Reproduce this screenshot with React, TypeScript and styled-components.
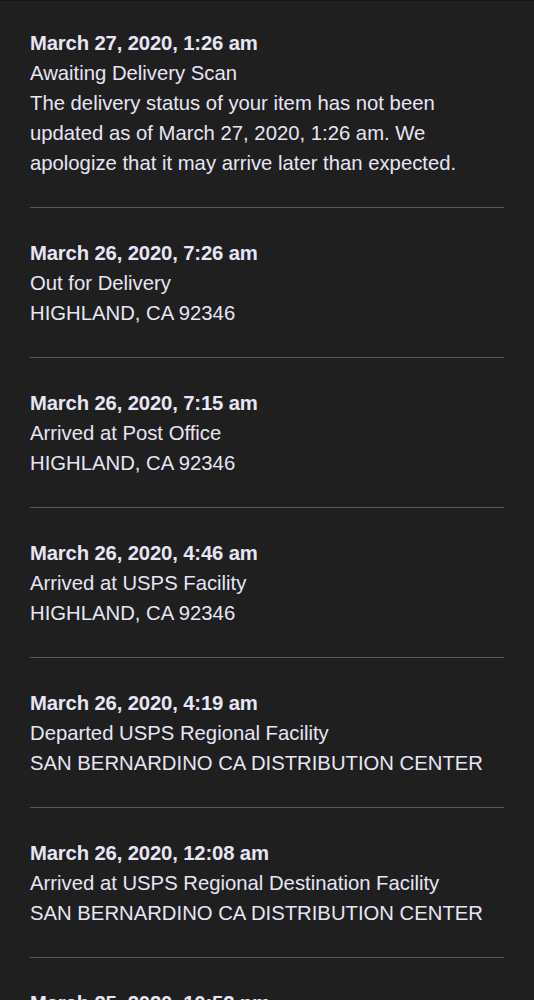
import React from 'react';
import styled, { createGlobalStyle } from 'styled-components';

const GlobalStyle = createGlobalStyle`
	html, body {
		margin: 0;
		padding: 0;
		background-color: #1f1f1f;
	}
`;

const Page = styled.div`
	background-color: #1f1f1f;
	border-top: 1px solid #151515;
	min-height: 1000px;
	padding: 0 30px;
	font-family: 'Liberation Sans', Arial, Helvetica, sans-serif;
	color: #e7e5f6;
	box-sizing: border-box;
`;

const EventList = styled.ul`
	list-style: none;
	margin: 0;
	padding: 0;
`;

const EventItem = styled.li`
	padding: 30px 0 29px;
	border-bottom: 1px solid #5a5a5c;

	&:first-child {
		padding-top: 27px;
	}
`;

const EventDate = styled.div`
	font-size: 20.3px;
	line-height: 30px;
	font-weight: 700;
	letter-spacing: -0.15px;
`;

const EventLine = styled.div`
	font-size: 20.3px;
	line-height: 30px;
	font-weight: 400;
`;

type TrackingEvent = {
	date: string;
	status: string;
	detail: string[];
};

const events: TrackingEvent[] = [
	{
		date: 'March 27, 2020, 1:26 am',
		status: 'Awaiting Delivery Scan',
		detail: [
			'The delivery status of your item has not been',
			'updated as of March 27, 2020, 1:26 am. We',
			'apologize that it may arrive later than expected.',
		],
	},
	{ date: 'March 26, 2020, 7:26 am', status: 'Out for Delivery', detail: ['HIGHLAND, CA 92346'] },
	{ date: 'March 26, 2020, 7:15 am', status: 'Arrived at Post Office', detail: ['HIGHLAND, CA 92346'] },
	{ date: 'March 26, 2020, 4:46 am', status: 'Arrived at USPS Facility', detail: ['HIGHLAND, CA 92346'] },
	{
		date: 'March 26, 2020, 4:19 am',
		status: 'Departed USPS Regional Facility',
		detail: ['SAN BERNARDINO CA DISTRIBUTION CENTER'],
	},
	{
		date: 'March 26, 2020, 12:08 am',
		status: 'Arrived at USPS Regional Destination Facility',
		detail: ['SAN BERNARDINO CA DISTRIBUTION CENTER'],
	},
	{
		date: 'March 25, 2020, 10:52 pm',
		status: 'Departed USPS Regional Facility',
		detail: ['SAN BERNARDINO CA DISTRIBUTION CENTER'],
	},
];

export default function App() {
	return (
		<>
			<GlobalStyle />
			<Page>
				<EventList>
					{events.map((ev) => (
						<EventItem key={ev.date}>
							<EventDate>{ev.date}</EventDate>
							<EventLine>{ev.status}</EventLine>
							{ev.detail.map((line) => (
								<EventLine key={line}>{line}</EventLine>
							))}
						</EventItem>
					))}
				</EventList>
			</Page>
		</>
	);
}
